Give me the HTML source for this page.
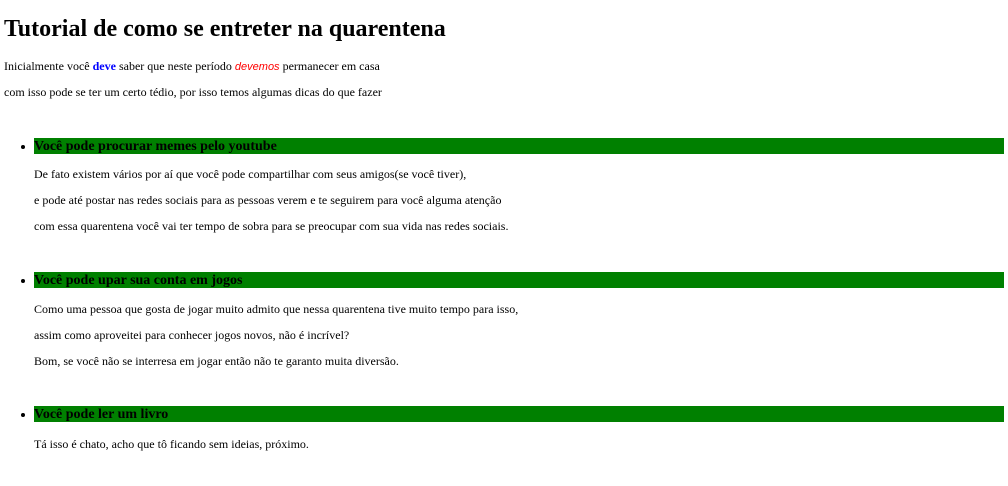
<!DOCTYPE html>
<html><head><meta charset="utf-8"><style>
body{margin:0;width:1008px;height:486px;background:#fff;font-family:"Liberation Serif",serif;color:#000;position:relative;overflow:hidden}
div{position:absolute;white-space:nowrap}
.t{font-size:12px;line-height:16px;left:4px}
.s{font-size:12px;line-height:16px;left:34px}
.h{left:34px;width:970px;height:16px;background:#008000;font-weight:bold;font-size:14px;line-height:18px;overflow:visible}
.b{left:21px;width:4px;height:4px;border-radius:50%;background:#000}
</style></head><body>
<div style="left:4px;top:14px;font-size:24px;font-weight:bold;line-height:30px">Tutorial de como se entreter na quarentena</div>
<div class="t" style="top:58px">Inicialmente você <b style="color:#00f">deve</b> saber que neste período <i style="color:red;font-family:'Liberation Sans',sans-serif;font-size:11px">devemos</i> permanecer em casa</div>
<div class="t" style="top:84px">com isso pode se ter um certo tédio, por isso temos algumas dicas do que fazer</div>

<div class="b" style="top:145px"></div>
<div class="h" style="top:138px">Você pode procurar memes pelo youtube</div>
<div class="s" style="top:166px">De fato existem vários por aí que você pode compartilhar com seus amigos(se você tiver),</div>
<div class="s" style="top:192px">e pode até postar nas redes sociais para as pessoas verem e te seguirem para você alguma atenção</div>
<div class="s" style="top:218px">com essa quarentena você vai ter tempo de sobra para se preocupar com sua vida nas redes sociais.</div>

<div class="b" style="top:279px"></div>
<div class="h" style="top:272px">Você pode upar sua conta em jogos</div>
<div class="s" style="top:301px">Como uma pessoa que gosta de jogar muito admito que nessa quarentena tive muito tempo para isso,</div>
<div class="s" style="top:327px">assim como aproveitei para conhecer jogos novos, não é incrível?</div>
<div class="s" style="top:353px">Bom, se você não se interresa em jogar então não te garanto muita diversão.</div>

<div class="b" style="top:413px"></div>
<div class="h" style="top:406px">Você pode ler um livro</div>
<div class="s" style="top:436px">Tá isso é chato, acho que tô ficando sem ideias, próximo.</div>
</body></html>
